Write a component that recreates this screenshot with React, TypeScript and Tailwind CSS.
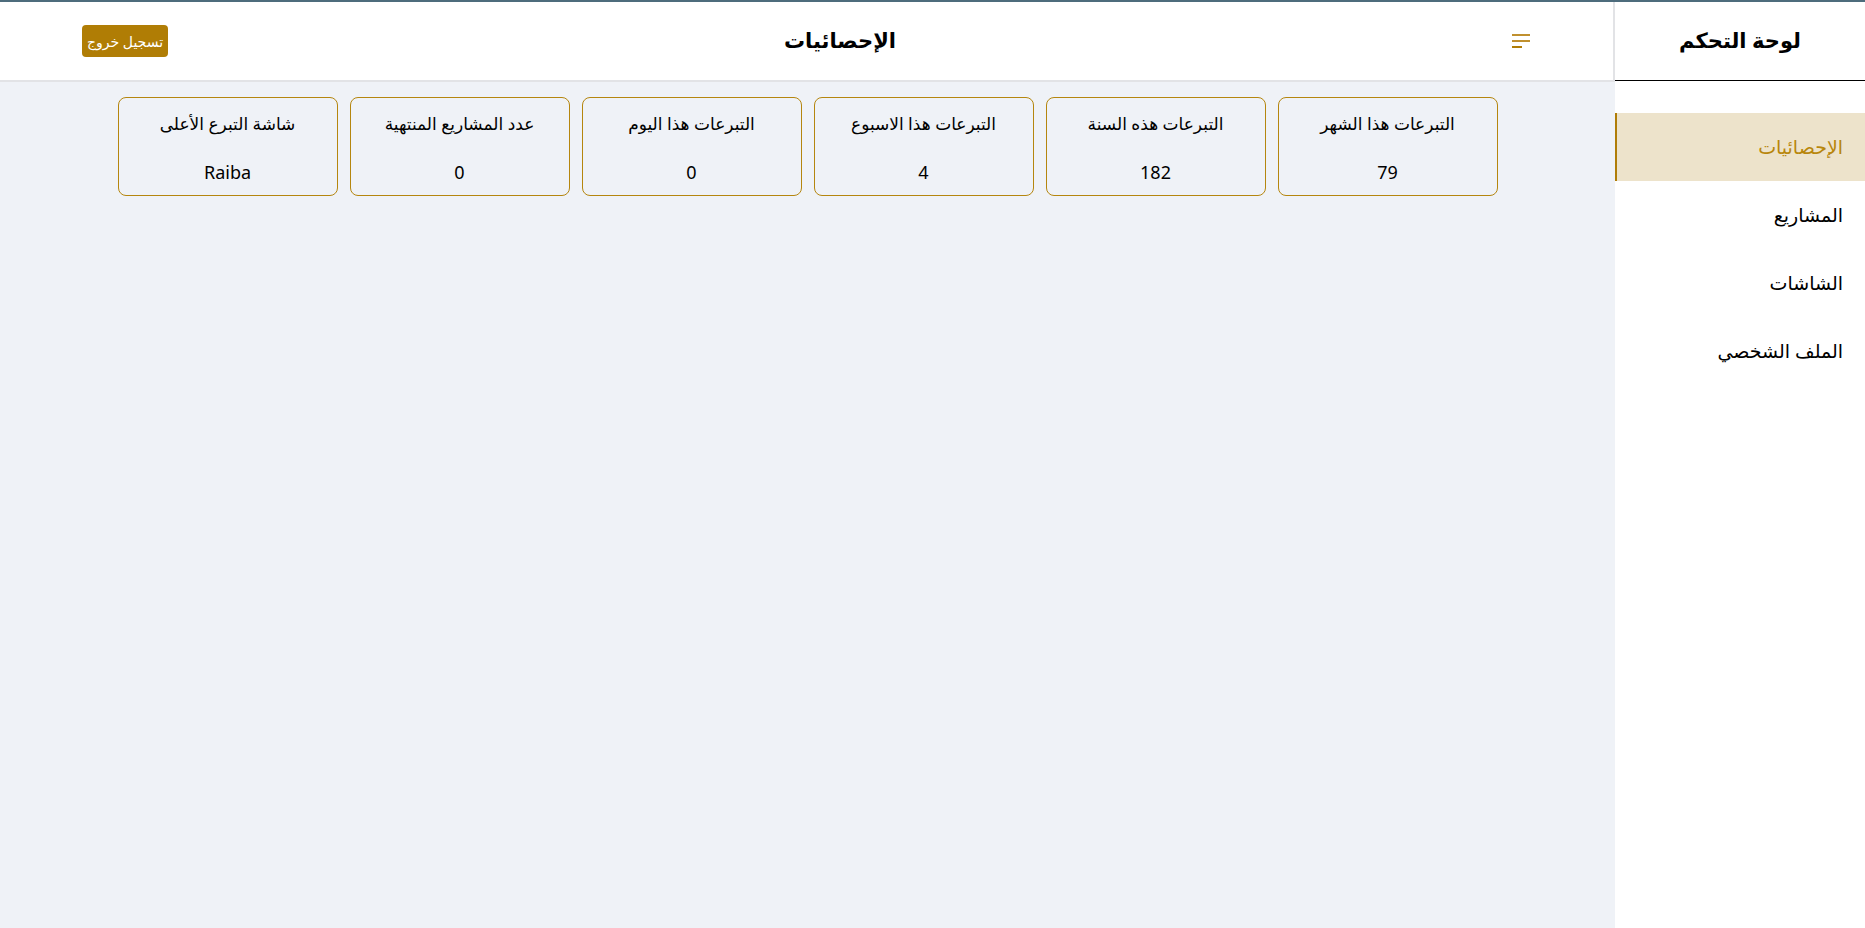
import React from "react";

const cards = [
  { title: "التبرعات هذا الشهر", value: "79" },
  { title: "التبرعات هذه السنة", value: "182" },
  { title: "التبرعات هذا الاسبوع", value: "4" },
  { title: "التبرعات هذا اليوم", value: "0" },
  { title: "عدد المشاريع المنتهية", value: "0" },
  { title: "شاشة التبرع الأعلى", value: "Raiba" },
];

const nav = ["الإحصائيات", "المشاريع", "الشاشات", "الملف الشخصي"];

export default function App() {
  return (
    <div
      dir="rtl"
      className="flex h-[928px] w-full overflow-hidden border-t-2 border-[#4d6c7c] bg-[#eff2f7] text-black"
      style={{ fontFamily: '"Noto Sans", "DejaVu Sans", sans-serif' }}
    >
      <aside className="flex w-[250px] shrink-0 flex-col bg-white">
        <div className="flex h-[79px] items-center justify-center border-b border-black">
          <span className="text-[21px] font-bold">لوحة التحكم</span>
        </div>
        <nav className="mt-[32px] flex flex-col">
          {nav.map((n, i) => (
            <div
              key={n}
              className={
                i === 0
                  ? "flex h-[68px] items-center border-l-2 border-[#b07d07] bg-[#ede3cb] pr-[22px] text-[19px] text-[#b8860b]"
                  : "flex h-[68px] items-center pr-[22px] text-[19px] text-black"
              }
            >
              {n}
            </div>
          ))}
        </nav>
      </aside>
      <main className="flex min-w-0 flex-1 flex-col">
        <header className="flex h-[80px] items-center justify-between border-b-2 border-r-2 border-[#e2e3e6] bg-white pl-[82px] pr-[83px]">
          <button className="flex h-[18px] w-[18px] flex-col items-end justify-center gap-[4px]">
            <span className="block h-[2px] w-[18px] bg-[#c0902f]" />
            <span className="block h-[2px] w-[18px] bg-[#c0902f]" />
            <span className="block h-[2px] w-[10px] bg-[#b07d07]" />
          </button>
          <h1 className="text-[21px] font-bold">الإحصائيات</h1>
          <button className="flex h-[32px] w-[86px] items-center justify-center whitespace-nowrap rounded-[4px] bg-[#b07d05] text-[14px] text-white">
            تسجيل خروج
          </button>
        </header>
        <div className="flex justify-center gap-[12px] pt-[15px]">
          {cards.map((c) => (
            <div
              key={c.title}
              className="flex h-[99px] w-[220px] flex-col items-center rounded-[8px] border border-[#b5860f]"
            >
              <div className="mt-[12px] whitespace-nowrap text-[17px] leading-[28px]">{c.title}</div>
              <div className="mt-[20px] text-[18px] leading-[28px]">{c.value}</div>
            </div>
          ))}
        </div>
      </main>
    </div>
  );
}
